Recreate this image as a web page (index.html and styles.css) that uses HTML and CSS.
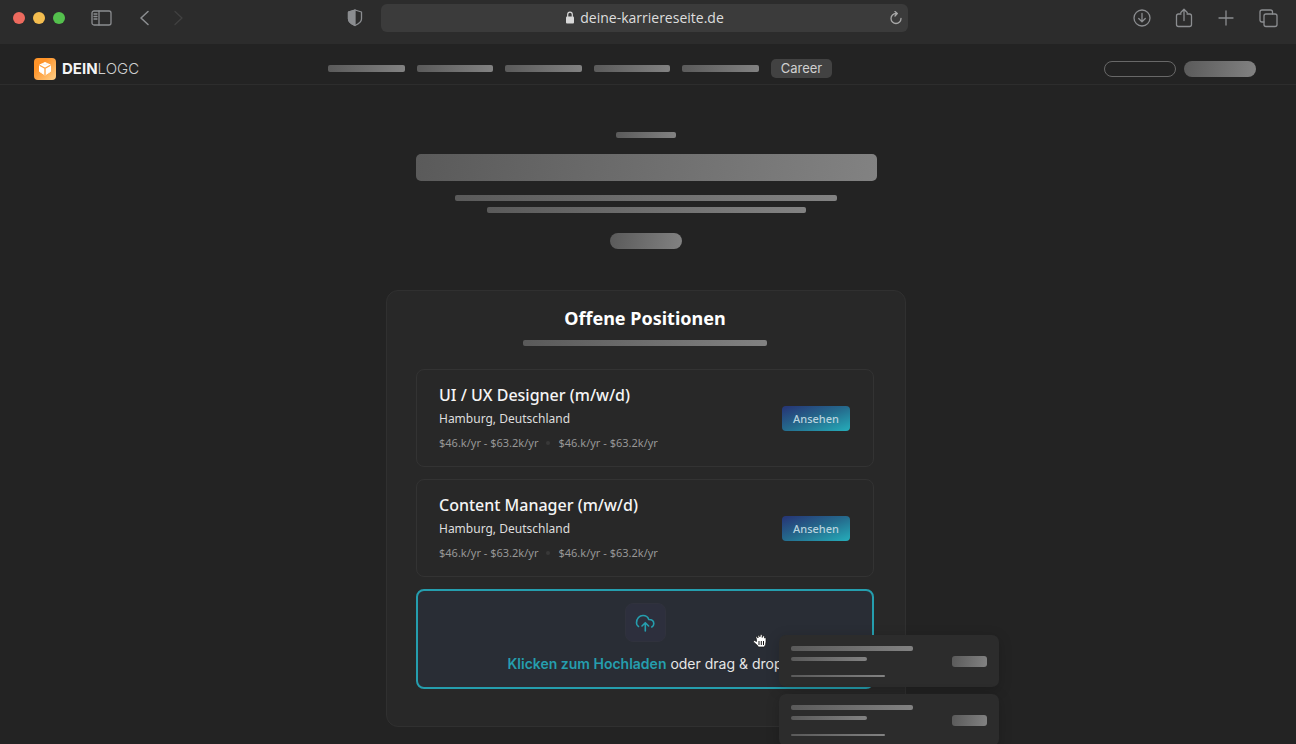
FILE: index.html
```html
<!DOCTYPE html>
<html lang="de">
<head>
<meta charset="utf-8">
<meta name="viewport" content="width=device-width, initial-scale=1">
<title>Karriereseite</title>
<link rel="stylesheet" href="styles.css">
</head>
<body>
<div class="window">
  <header class="toolbar">
    <div class="toolbar-side">
      <div class="lights"><span class="light red"></span><span class="light yellow"></span><span class="light green"></span></div>
      <button class="tool sidebar-tool" aria-label="Seitenleiste"><svg width="22" height="16" viewBox="0 0 22 16"><rect x="1" y="1" width="19" height="14" rx="2"/><path d="M8 1v14M3 4h3M3 6.500h3M3 9h3"/></svg></button>
      <button class="tool back-tool" aria-label="Zurück"><svg width="12" height="16" viewBox="0 0 12 16"><path d="M9 1.500 2 8l7 6.500" stroke-width="1.600"/></svg></button>
      <button class="tool forward-tool" aria-label="Vor"><svg width="12" height="16" viewBox="0 0 12 16"><path d="M3 1.500 10 8l-7 6.500"/></svg></button>
      <button class="tool shield-tool" aria-label="Datenschutz"><svg width="16" height="18" viewBox="0 0 16 18"><path d="M8 1 14.500 3v7c0 3-3 5-6.500 6.500C4.500 15 1.500 13 1.500 10V3z"/><path class="solid" d="M8 1v15.500C4.500 15 1.500 13 1.500 10V3z"/></svg></button>
    </div>
    <div class="address">
      <svg class="lock" width="10" height="13" viewBox="0 0 10 13"><rect x="1" y="5.500" width="8" height="7" rx="1"/><path d="M2.700 6V3.500a2.300 2.300 0 0 1 4.600 0V6"/></svg>
      <span>deine-karriereseite.de</span>
      <button class="tool reload" aria-label="Neu laden"><svg width="14" height="14" viewBox="0 0 14 14"><path d="M12 7.500A5 5 0 1 1 7 2.500h1M6 .500l2.300 2.100L6 5"/></svg></button>
    </div>
    <div class="toolbar-side actions">
      <button class="tool" aria-label="Downloads"><svg width="20" height="20" viewBox="0 0 20 20"><circle cx="10" cy="10" r="8"/><path d="M10 5.500v8M6.700 10.500l3.300 3.300 3.300-3.300"/></svg></button>
      <button class="tool" aria-label="Teilen"><svg width="20" height="20" viewBox="0 0 20 20"><path d="M7 6H4.500Q2.500 6 2.500 8v8.500q0 2 2 2h11q2 0 2-2V8q0-2-2-2H13M10 12.500V1.500M6.800 4.500 10 1.300l3.200 3.200"/></svg></button>
      <button class="tool" aria-label="Neuer Tab"><svg width="20" height="20" viewBox="0 0 20 20"><path d="M10 3v14M3 10h14"/></svg></button>
      <button class="tool" aria-label="Tabs"><svg width="20" height="20" viewBox="0 0 20 20"><rect x="6" y="6" width="13" height="12.500" rx="2"/><path d="M6 14H4q-2 0-2-2V4q0-2 2-2h8.500q2 0 2 2v2"/></svg></button>
    </div>
  </header>

  <nav class="site-nav">
    <a class="logo" href="#">
      <svg width="22" height="22" viewBox="0 0 22 22">
        <defs><linearGradient id="orange" x1="0" y1="0" x2="1" y2="1"><stop offset="0.300" stop-color="#ff9429"/><stop offset="1" stop-color="#ffd08a"/></linearGradient></defs>
        <rect width="22" height="22" rx="4" fill="url(#orange)"/>
        <path d="M11 4.500 16.500 7v6.500L11 17l-5.500-3.500V7z" fill="#fff" stroke="#fff" stroke-linejoin="round"/>
        <path d="M5.500 7.300 11 10.200l5.500-2.900M11 10.200V17" fill="none" stroke="#ffa23f" stroke-width="1.300"/>
        <path d="M8 5.500l3 1.500 3-1.500" fill="none" stroke="#ffd7a8" stroke-width=".500"/>
      </svg>
      <span class="logo-text"><b>DEIN</b>LOGC</span>
    </a>
    <ul class="links">
      <li class="bar"></li><li class="bar"></li><li class="bar"></li><li class="bar"></li><li class="bar"></li>
      <li><a class="career" href="#">Career</a></li>
    </ul>
    <div class="nav-actions">
      <button class="pill outline" aria-label="Anmelden"></button>
      <button class="pill" aria-label="Kontakt"></button>
    </div>
  </nav>

  <main class="content">
    <section class="hero">
      <div class="bar kicker"></div>
      <div class="bar headline"></div>
      <div class="bar line-long"></div>
      <div class="bar line-short"></div>
      <button class="pill" aria-label="Mehr erfahren"></button>
    </section>

    <section class="panel">
      <h1>Offene Positionen</h1>
      <div class="bar subtitle"></div>
      <div class="list">
        <article class="job">
          <div>
            <h2>UI / UX Designer (m/w/d)</h2>
            <p class="place">Hamburg, Deutschland</p>
            <p class="salary"><span>$46.k/yr - $63.2k/yr</span><i class="dot"></i><span>$46.k/yr - $63.2k/yr</span></p>
          </div>
          <button class="view">Ansehen</button>
        </article>
        <article class="job">
          <div>
            <h2>Content Manager (m/w/d)</h2>
            <p class="place">Hamburg, Deutschland</p>
            <p class="salary"><span>$46.k/yr - $63.2k/yr</span><i class="dot"></i><span>$46.k/yr - $63.2k/yr</span></p>
          </div>
          <button class="view">Ansehen</button>
        </article>
        <button class="dropzone">
          <span class="upload-icon"><svg width="20" height="18" viewBox="0 0 20 18"><path d="M3.500 12.500A4 4 0 0 1 1.500 9C1.500 4.500 4.500 1.500 8 1.500c3 0 5 1.500 5.800 4 3 0 5 1.800 5 4.200 0 1.500-.800 2.600-2 3.300M10.300 17V9M7 12l3.300-3.300 3.300 3.300"/></svg></span>
          <span class="upload-text"><strong>Klicken zum Hochladen</strong> oder drag &amp; drop</span>
        </button>
      </div>

      <svg class="grab" width="16" height="16" viewBox="0 0 16 16"><path d="M4.500 7 4 4.500Q4 3 5.200 3.400L6 5V3Q6.500 1.700 7.800 2.500V4l.400-2Q9.500 1 10.200 2.300V4.500l.600-1.500Q12 2.300 12.500 3.500V5q1.300-.700 1.500.500V9q0 2.500-1.700 5H6.500Q5 11.500 2 9.500.800 8 2.500 7.500L4.500 8.500z"/><path class="creases" d="M7 8v4M9.300 8v4M11.500 8v4"/></svg>

      <div class="toasts">
        <div class="toast"><div class="toast-lines"><div class="bar first"></div><div class="bar second"></div><div class="bar third"></div></div><div class="bar chip"></div></div>
        <div class="toast"><div class="toast-lines"><div class="bar first"></div><div class="bar second"></div><div class="bar third"></div></div><div class="bar chip"></div></div>
      </div>
    </section>
  </main>
</div>
</body>
</html>
```

FILE: styles.css
```css
* { box-sizing: border-box; }
body { margin: 0; background: #232323; color: #fff; font-family: "Noto Sans", sans-serif; }
button { border: 0; padding: 0; background: none; font: inherit; color: inherit; }
h1, h2, p, ul { margin: 0; padding: 0; }
a { color: inherit; text-decoration: none; }
svg { display: block; flex: none; }

.window { min-height: 100vh; overflow: hidden; }
.bar { height: 7px; border-radius: 2px; background: linear-gradient(100deg, #5a5a5a, #828282); }
.pill { width: 72px; height: 16px; border-radius: 8px; background: linear-gradient(100deg, #5a5a5a, #828282); }
.pill.outline { background: none; border: 1px solid #686868; }

.toolbar { display: flex; align-items: center; height: 44px; padding: 0 7px 8px 0; background: #2c2c2c; }
.toolbar-side { flex: 1; display: flex; align-items: center; padding: 0 18px 0 13px; }
.actions { justify-content: flex-end; gap: 22px; padding: 0 11px 0 20px; }
.lights { display: flex; gap: 8px; }
.light { width: 12px; height: 12px; border-radius: 50%; }
.red { background: #ed6a5e; }
.yellow { background: #f4bd4f; }
.green { background: #54c04d; }
.tool svg { fill: none; stroke: #8b8d90; stroke-width: 1.3; stroke-linecap: round; stroke-linejoin: round; }
.sidebar-tool { margin-left: 26px; }
.back-tool { margin-left: 26px; }
.forward-tool { margin-left: 21px; }
.tool.forward-tool svg { stroke: #414141; }
.shield-tool { margin-left: auto; }
.shield-tool .solid { fill: #8b8d90; }
.address { position: relative; flex: 0 1 527px; display: flex; align-items: center; justify-content: center; gap: 5px; height: 28px; margin-top: -1px; border-radius: 6px; background: #3b3b3b; color: #dedede; font: 14px "Open Sans", sans-serif; }
.lock { fill: #d8d8d8; }
.lock path { fill: none; stroke: #d8d8d8; stroke-width: 1.2; }
.reload { position: absolute; right: 5px; top: 7px; }
.tool.reload svg { stroke: #a8a8a8; }

.site-nav { display: flex; align-items: center; height: 41px; padding: 9px 40px 0 34px; border-bottom: 1px solid #2d2d2d; }
.logo { flex: 0 0 294px; display: flex; align-items: center; gap: 6px; }
.logo-text { color: #cfcfcf; font: 300 15px Inter, sans-serif; }
.logo-text b { color: #f4f4f4; font-weight: 700; }
.links { flex: 0 1 504px; display: flex; align-items: center; gap: 12px; list-style: none; }
.links .bar { flex: 1; }
.career { display: block; width: 61px; border-radius: 5px; background: #424242; color: #d0d0d0; font: 13px/19px Inter, sans-serif; text-align: center; }
.nav-actions { display: flex; gap: 8px; margin-left: auto; }

.content { display: flex; flex-direction: column; align-items: center; padding: 47px 4px 17px 0; }
.hero { display: flex; flex-direction: column; align-items: center; width: 100%; }
.kicker { width: 60px; height: 6px; }
.headline { width: 461px; height: 27px; margin-top: 16px; border-radius: 5px; }
.line-long { width: 382px; height: 6px; margin-top: 14px; }
.line-short { width: 319px; height: 6px; margin-top: 6px; }
.hero .pill { margin-top: 20px; }

.panel { position: relative; width: 520px; margin-top: 41px; padding: 14px 31px 37px 29px; border: 1px solid #303030; border-radius: 12px; background: #282828; }
.panel h1 { font-size: 18px; line-height: 26px; font-weight: 700; text-align: center; }
.subtitle { width: 244px; height: 6px; margin: 9px auto 0; }
.list { display: grid; gap: 12px; margin-top: 23px; }
.job { display: flex; align-items: center; justify-content: space-between; padding: 12px 23px 12px 22px; border: 1px solid #333; border-radius: 8px; }
.job h2 { font-size: 16px; line-height: 26px; font-weight: 500; color: #f5f5f5; }
.place { color: #dedede; font-size: 12px; line-height: 22px; }
.salary { display: flex; align-items: center; gap: 8px; margin-top: 2px; color: #979797; font-size: 11px; line-height: 22px; }
.dot { width: 4px; height: 4px; border-radius: 50%; background: #383838; }
.view { width: 68px; height: 25px; border-radius: 4px; background: linear-gradient(160deg, #263877 5%, #256b8d 50%, #25a7b6 95%); color: #b9d3df; font-size: 11px; font-weight: 500; }
.dropzone { display: flex; flex-direction: column; align-items: center; padding: 12px 0; border: 2px solid #259eae; border-radius: 8px; background: #292d35; }
.upload-icon { display: grid; place-items: center; width: 41px; height: 39px; border: 1px solid #30323d; border-radius: 8px; background: #2d2f3d; }
.upload-icon svg { fill: none; stroke: #259eae; stroke-width: 1.6; stroke-linecap: round; stroke-linejoin: round; }
.upload-text { margin-top: 11px; color: #e6e6e6; font: 14px/22px Inter, sans-serif; }
.upload-text strong { color: #259eae; font-weight: 600; }

.grab { position: absolute; left: 365px; top: 342px; fill: #fff; stroke: #151515; stroke-width: .7; }
.grab .creases { stroke-width: 1; }
.toasts { position: absolute; left: 392px; top: 344px; display: grid; gap: 7px; width: 220px; }
.toast { display: flex; align-items: center; justify-content: space-between; height: 52px; padding: 0 12px; border-radius: 7px; background: #2c2c2c; box-shadow: 0 3px 14px #00000030; }
.toast-lines { display: grid; justify-items: start; }
.first { width: 122px; height: 5px; }
.second { width: 76px; height: 4px; margin-top: 6px; }
.third { width: 94px; height: 2px; margin-top: 14px; }
.chip { width: 35px; height: 11px; border-radius: 3px; }
```
